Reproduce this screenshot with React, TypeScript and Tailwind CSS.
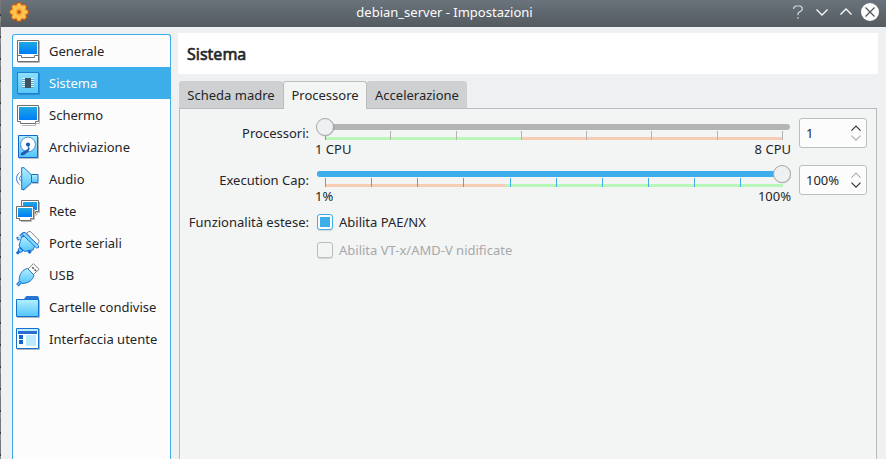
import React, { useState } from "react";

/* ---------- Sidebar icons (24x24) ---------- */

const IconDefs = () => (
  <svg className="absolute h-0 w-0">
    <defs>
      <linearGradient id="screen" x1="0" y1="0" x2="0" y2="1">
        <stop offset="0" stopColor="#1fa8e4" />
        <stop offset="1" stopColor="#007df8" />
      </linearGradient>
      <linearGradient id="sky" x1="0" y1="0" x2="0" y2="1">
        <stop offset="0" stopColor="#b4f0ff" />
        <stop offset="1" stopColor="#52c4fb" />
      </linearGradient>
      <radialGradient id="sun">
        <stop offset="0" stopColor="#ffe9a0" />
        <stop offset="0.65" stopColor="#fdc658" />
        <stop offset="1" stopColor="#f79a30" />
      </radialGradient>
    </defs>
  </svg>
);

const GeneralIcon = () => (
  <>
    <path d="M2 23.5H23.5V2" stroke="#b5b5b5" fill="none" />
    <path d="M1.5 1.5H22.5V22.5H1.5Z" fill="#fff" stroke="#6f6f6f" />
    <path d="M3 3H21V15H3Z" fill="url(#screen)" />
    <path d="M1.5 16.5H5.5V18.5H18.5V16.5H22.5" fill="none" stroke="#6f6f6f" />
  </>
);

const SystemIcon = () => (
  <>
    <path d="M2 23.5H23.5V2" stroke="#2f8fc9" fill="none" />
    <path d="M1.5 1.5H22.5V22.5H1.5Z" fill="url(#sky)" stroke="#1a80d8" />
    <path d="M2 2H22V22H2Z" fill="#5fcbf6" fillOpacity="0.45" />
    <path
      d="M6 7.5H18M6 9.5H18M6 11.5H18M6 13.5H18M6 15.5H18"
      stroke="#e4f7fe"
    />
    <path
      d="M6 8.5H18M6 10.5H18M6 12.5H18M6 14.5H18M6 16.5H18"
      stroke="#5fa6c8"
    />
    <path d="M9 7H15V17H9Z" fill="#3d5361" />
  </>
);

const DisplayIcon = () => (
  <>
    <path d="M6 22.5H19.5V20.5H23.5V4" stroke="#b5b5b5" fill="none" />
    <path
      d="M1.5 2.5H22.5V18.5H19.5V20.5H4.5V18.5H1.5Z"
      fill="#fff"
      stroke="#6f6f6f"
    />
    <path d="M3 4H21V17H3Z" fill="url(#screen)" />
  </>
);

const StorageIcon = () => (
  <>
    <path d="M3 23.4H22.5V2" stroke="#b5b5b5" fill="none" />
    <path d="M2.5 0.5H21.5V22.5H2.5Z" fill="url(#sky)" stroke="#1466cc" />
    <circle cx="12" cy="9.5" r="7.4" fill="#fff" stroke="#2a74c8" strokeWidth="0.8" />
    <circle cx="12" cy="9.5" r="2.1" fill="#1d5fb4" />
    <path d="M14 12.5L12.5 16.5L9.5 19L7 20.5L4.5 20L5 18L9.5 15.2Z" fill="#1d5fb4" />
    <path d="M12 10L12.6 14" stroke="#1d5fb4" />
  </>
);

const AudioIcon = () => (
  <>
    <path d="M7 24L16 16.5H23" stroke="#c4c4c4" fill="none" />
    <path
      d="M5.7 0.7H8L15.5 8V15.5L8 22.5H5.7Z"
      fill="url(#sky)"
      stroke="#1f6fd0"
    />
    <path d="M15.5 7.5H22V15.5H15.5Z" fill="url(#sky)" stroke="#1f6fd0" />
    <path
      d="M3.6 5.5C-0.4 8 -0.4 15 3.6 17.5M5.4 8.8C3 9.8 3 13.2 5.4 14.2"
      fill="none"
      stroke="#2f79d2"
    />
  </>
);

const NetworkIcon = () => (
  <>
    <path d="M18 16H21V13.5H23.5V3" stroke="#b5b5b5" fill="none" />
    <path
      d="M5.5 1.5H22.5V12.5H19.5V14.5H8.5V12.5H5.5Z"
      fill="#fff"
      stroke="#6f6f6f"
    />
    <path d="M7 3H21V11H7Z" fill="url(#screen)" />
    <path d="M5 22.5H15.5V20.5H18.5V10" stroke="#b5b5b5" fill="none" />
    <path
      d="M0.5 7.5H17.5V19.5H14.5V21.5H3.5V19.5H0.5Z"
      fill="#fff"
      stroke="#6f6f6f"
    />
    <path d="M2 9H16V18H2Z" fill="url(#screen)" />
  </>
);

const SerialIcon = () => (
  <>
    <path
      d="M10.5 2L13 0.6H14.5L22.8 9V12L20.5 13.5Z"
      fill="#fff"
      stroke="#777"
      strokeWidth="0.9"
    />
    <path d="M3 7L1 8.2M7.5 2.6L4.5 5.5" stroke="#1f6fd0" strokeWidth="3.4" />
    <path d="M14.5 19.5L12.6 22" stroke="#1f6fd0" strokeWidth="3.4" />
    <path
      d="M5.5 6L10 5L19 14L17 19L13 19.5L8.5 20.5L3 15L4.2 10.5Z"
      fill="url(#sky)"
      stroke="#1f6fd0"
    />
    <path
      d="M7 1.5H9L22.5 14.5V16.5L20.5 17L6.5 3.5Z"
      fill="#7fd8fd"
      stroke="#1f6fd0"
    />
    <path d="M4 19.5L0.8 22.7" stroke="#1f6fd0" strokeWidth="3" />
    <path d="M3.5 16.5L7 20L4.5 21.5L2 19Z" fill="#65cdfb" stroke="#1f6fd0" />
    <path d="M1.8 8L6.5 3.6" stroke="#8adcfc" strokeWidth="1.2" />
  </>
);

const UsbIcon = () => (
  <>
    <path
      d="M12 6L17.5 0.7L23 6.2L17.5 11.5Z"
      fill="#fff"
      stroke="#858585"
    />
    <path d="M16.3 4.3L17.8 5.8M18.6 6.5L20 8" stroke="#555" strokeWidth="1.6" />
    <path
      d="M11.5 5.5L18 12C17 17 12.5 20.5 6 20.5L3.2 17.5C3 11.5 6.5 6.5 11.5 5.5Z"
      fill="url(#sky)"
      stroke="#2a70c4"
    />
    <path d="M4.5 19L1.3 22.2" stroke="#1f6fd0" strokeWidth="3.4" />
    <path d="M4.5 19L1.6 21.9" stroke="#65cdfb" strokeWidth="1.2" />
  </>
);

const FolderIcon = () => (
  <>
    <path d="M1 22.5H23.5V5" stroke="#b5b5b5" fill="none" />
    <path d="M8.5 5V3L10.5 1H21.5L23 2.5V5Z" fill="#2a74d4" />
    <path d="M0.5 4.5H22.5V21.5H0.5Z" fill="url(#sky)" stroke="#1571d0" />
  </>
);

const InterfaceIcon = () => (
  <>
    <path d="M1 22.5H23.5V2" stroke="#b5b5b5" fill="none" />
    <path d="M0.5 1.5H22.5V21.5H0.5Z" fill="#fff" stroke="#1571d0" />
    <path d="M1 2H22V4H1Z" fill="#b9ecfd" />
    <path d="M2 4H21V7H2Z" fill="#2a6fd0" />
    <path d="M3 8H7V12H3ZM3 13H7V17H3Z" fill="#0f66da" />
    <path d="M10 8H20V19H10Z" fill="#b9eafd" />
  </>
);

const sections = [
  { label: "Generale", Icon: GeneralIcon },
  { label: "Sistema", Icon: SystemIcon },
  { label: "Schermo", Icon: DisplayIcon },
  { label: "Archiviazione", Icon: StorageIcon },
  { label: "Audio", Icon: AudioIcon },
  { label: "Rete", Icon: NetworkIcon },
  { label: "Porte seriali", Icon: SerialIcon },
  { label: "USB", Icon: UsbIcon },
  { label: "Cartelle condivise", Icon: FolderIcon },
  { label: "Interfaccia utente", Icon: InterfaceIcon },
];

const tabs = [
  { label: "Scheda madre", width: "w-[104px]" },
  { label: "Processore", width: "w-[84px]" },
  { label: "Accelerazione", width: "w-[100px]" },
];

/* ---------- Controls ---------- */

const TitleBar = () => (
  <div className="flex h-[27px] items-start bg-gradient-to-b from-[#6a737b] to-[#545b61] pl-[7px]">
    <svg width="22" height="22" viewBox="-11 -11 22 22" className="mt-px">
      <g fill="#e8791a" stroke="#b9520f" strokeWidth="0.6">
        {[0, 45, 90, 135].map((a) => (
          <rect
            key={a}
            x="-2.6"
            y="-9.6"
            width="5.2"
            height="19.2"
            rx="1.6"
            transform={`rotate(${a})`}
          />
        ))}
      </g>
      <circle r="7.6" fill="url(#sun)" />
      {[0, 45, 90, 135].map((a) => (
        <rect
          key={a}
          x="-1.6"
          y="-8.6"
          width="3.2"
          height="17.2"
          rx="1"
          fill="#fdc653"
          transform={`rotate(${a})`}
        />
      ))}
      <circle r="3.4" fill="#f9a535" />
      <circle r="1.7" fill="#b9520f" />
    </svg>
    <div className="flex-1 pl-[68px] pt-[3px] text-center leading-[19px] text-[#fcfcfc]">
      debian_server - Impostazioni
    </div>
    <svg
      width="96"
      height="24"
      viewBox="0 0 96 24"
      fill="none"
      stroke="#fcfcfc"
      className="-ml-px"
    >
      <path
        d="M3.7 9V7.8L5.5 6H10.5L12.2 7.8V10L8 13.2V15.3M8 17V18.7"
        stroke="#d5d8da"
        strokeWidth="1.2"
      />
      <path d="M26.5 9.5L32 15L37.5 9.5M50.5 14.5L56 9L61.5 14.5" strokeWidth="1.3" />
      <circle cx="80" cy="12" r="9" fill="#fcfcfc" stroke="none" />
      <path d="M75.5 7.5L84.5 16.5M84.5 7.5L75.5 16.5" stroke="#4d545b" strokeWidth="1.2" />
    </svg>
  </div>
);

interface ScaleProps {
  value: number;
  ticks: number[];
  bands: { from: number; to: number; color: string }[];
  minLabel: string;
  maxLabel: string;
}

// x positions are measured inside the 476px wide widget
const Scale: React.FC<ScaleProps> = ({ value, ticks, bands, minLabel, maxLabel }) => (
  <div className="w-[476px]">
    <svg width="476" height="23" viewBox="0 0 476 23" className="block">
      <rect x="2" y="7" width="473" height="6" rx="3" fill="#b4b4b4" />
      {value > 20 && <rect x="2" y="7" width={value} height="6" rx="3" fill="#3daee9" />}
      {bands.map((b) => (
        <rect key={b.from} x={b.from} y="20" width={b.to - b.from} height="3" fill={b.color} />
      ))}
      {ticks.map((x) => (
        <rect
          key={x}
          x={x}
          y="14"
          width="1"
          height="9"
          fill={x <= value ? "#3daee9" : "#b4b4b4"}
        />
      ))}
      <circle cx={value + 0.6} cy="10.6" r="9" fill="#000" fillOpacity="0.12" />
      <circle cx={value} cy="10" r="8.5" fill="#eff0f1" stroke="#a5a7a9" />
    </svg>
    <div className="flex justify-between leading-[18px]">
      <span>{minLabel}</span>
      <span>{maxLabel}</span>
    </div>
  </div>
);

const SpinBox = ({ value, atMax }: { value: string; atMax?: boolean }) => (
  <div className="ml-2 mt-px flex h-[30px] w-[68px] items-center justify-between rounded-[3px] border border-[#bbbdbe] bg-[#fcfcfc] pl-[6px] pr-[5px]">
    <span className="pt-px">{value}</span>
    <svg width="10" height="18" viewBox="0 0 10 18" fill="none" strokeWidth="1.2">
      <path d="M0.5 6.6L5 2.1L9.5 6.6" stroke={atMax ? "#aeb0b1" : "#31363b"} />
      <path d="M0.5 11.6L5 16.1L9.5 11.6" stroke={atMax ? "#31363b" : "#aeb0b1"} />
    </svg>
  </div>
);

interface CheckProps {
  label: string;
  checked: boolean;
  disabled?: boolean;
  onChange?: () => void;
}

const CheckBox: React.FC<CheckProps> = ({ label, checked, disabled, onChange }) => (
  <button
    disabled={disabled}
    onClick={onChange}
    className={`ml-[2px] flex h-[18px] items-center gap-[6px] ${
      disabled ? "text-[#a7a9aa]" : ""
    }`}
  >
    <span
      className={`flex h-4 w-4 items-center justify-center rounded-[3px] border shadow-[0_1px_1px_rgba(0,0,0,0.12)] ${
        checked ? "border-[#3daee9] bg-[#fcfcfc]" : "border-[#bbbdbe] bg-[#f3f4f4]"
      }`}
    >
      {checked && <span className="h-[10px] w-[10px] bg-[#3daee9]" />}
    </span>
    <span className="leading-[18px]">{label}</span>
  </button>
);

const GREEN = "#b9f7b9";
const ORANGE = "#f7ccb5";

export default function App() {
  const [section, setSection] = useState("Sistema");
  const [tab, setTab] = useState("Processore");
  const [pae, setPae] = useState(true);

  return (
    <div className="flex h-[459px] w-[886px] overflow-hidden bg-[#eff0f1] font-['Noto_Sans',sans-serif] text-[13px] text-[#232629]">
      <IconDefs />
      {/* Sliver of the window behind */}
      <div className="w-px shrink-0 bg-[repeating-linear-gradient(#77777a_0_14px,#3a3a3c_14px_16px,#8a8a8c_16px_22px)]" />

      <div className="flex min-w-0 flex-1 flex-col">
        <TitleBar />

        <div className="flex min-h-0 flex-1 pl-[11px]">
          {/* Sections */}
          <div className="mt-[7px] w-[159px] shrink-0 rounded-t-[3px] border border-b-0 border-[#3daee9] bg-[#fcfcfc]">
            {sections.map(({ label, Icon }) => (
              <button
                key={label}
                onClick={() => setSection(label)}
                className={`flex h-8 w-full items-center gap-[9px] pl-[3px] text-left ${
                  section === label ? "bg-[#3daee9] text-[#fcfcfc]" : ""
                }`}
              >
                <svg width="24" height="24" viewBox="0 0 24 24">
                  <Icon />
                </svg>
                <span className="leading-[18px]">{label}</span>
              </button>
            ))}
          </div>

          {/* Page */}
          <div className="ml-[7px] flex flex-1 flex-col pt-[6px]">
            <h1 className="mr-2 h-[41px] bg-white pl-[9px] text-base leading-[43px] [-webkit-text-stroke:0.6px_#232629]">
              {section}
            </h1>

            <div className="z-10 mt-[7px] flex h-7 pl-px leading-[18px]">
              {tabs.map(({ label, width }) => (
                <button
                  key={label}
                  onClick={() => setTab(label)}
                  className={`${width} rounded-t-[3px] ${
                    tab === label
                      ? "h-7 border border-b-0 border-[#b9bbbc] bg-[#f3f4f4] pb-[2px]"
                      : "h-[27px] bg-[#cfd0d2] pt-px"
                  }`}
                >
                  {label}
                </button>
              ))}
            </div>

            <div className="-mt-px ml-px mr-[9px] flex-1 border border-b-0 border-[#b9bbbc] bg-[#f3f4f4] pt-[8px]">
              <div className="flex h-[47px]">
                <div className="w-[129px] pt-[7px] text-right leading-[18px]">Processori:</div>
                <div className="ml-[6px] flex">
                  <Scale
                    value={10}
                    ticks={[10, 75, 141, 206, 271, 336, 402, 467]}
                    bands={[
                      { from: 10, to: 206, color: GREEN },
                      { from: 206, to: 467, color: ORANGE },
                    ]}
                    minLabel="1 CPU"
                    maxLabel="8 CPU"
                  />
                  <SpinBox value="1" />
                </div>
              </div>

              <div className="flex h-[47px]">
                <div className="w-[129px] pt-[7px] text-right leading-[18px]">Execution Cap:</div>
                <div className="ml-[6px] flex">
                  <Scale
                    value={467}
                    ticks={[10, 56, 102, 148, 195, 241, 287, 333, 379, 425]}
                    bands={[
                      { from: 10, to: 190, color: ORANGE },
                      { from: 190, to: 468, color: GREEN },
                    ]}
                    minLabel="1%"
                    maxLabel="100%"
                  />
                  <SpinBox value="100%" atMax />
                </div>
              </div>

              <div className="mt-[2px] flex">
                <div className="w-[129px] text-right leading-[18px]">Funzionalità estese:</div>
                <div className="ml-[6px] flex flex-col gap-[10px]">
                  <CheckBox label="Abilita PAE/NX" checked={pae} onChange={() => setPae(!pae)} />
                  <CheckBox label="Abilita VT-x/AMD-V nidificate" checked={false} disabled />
                </div>
              </div>
            </div>
          </div>
        </div>
      </div>
    </div>
  );
}
